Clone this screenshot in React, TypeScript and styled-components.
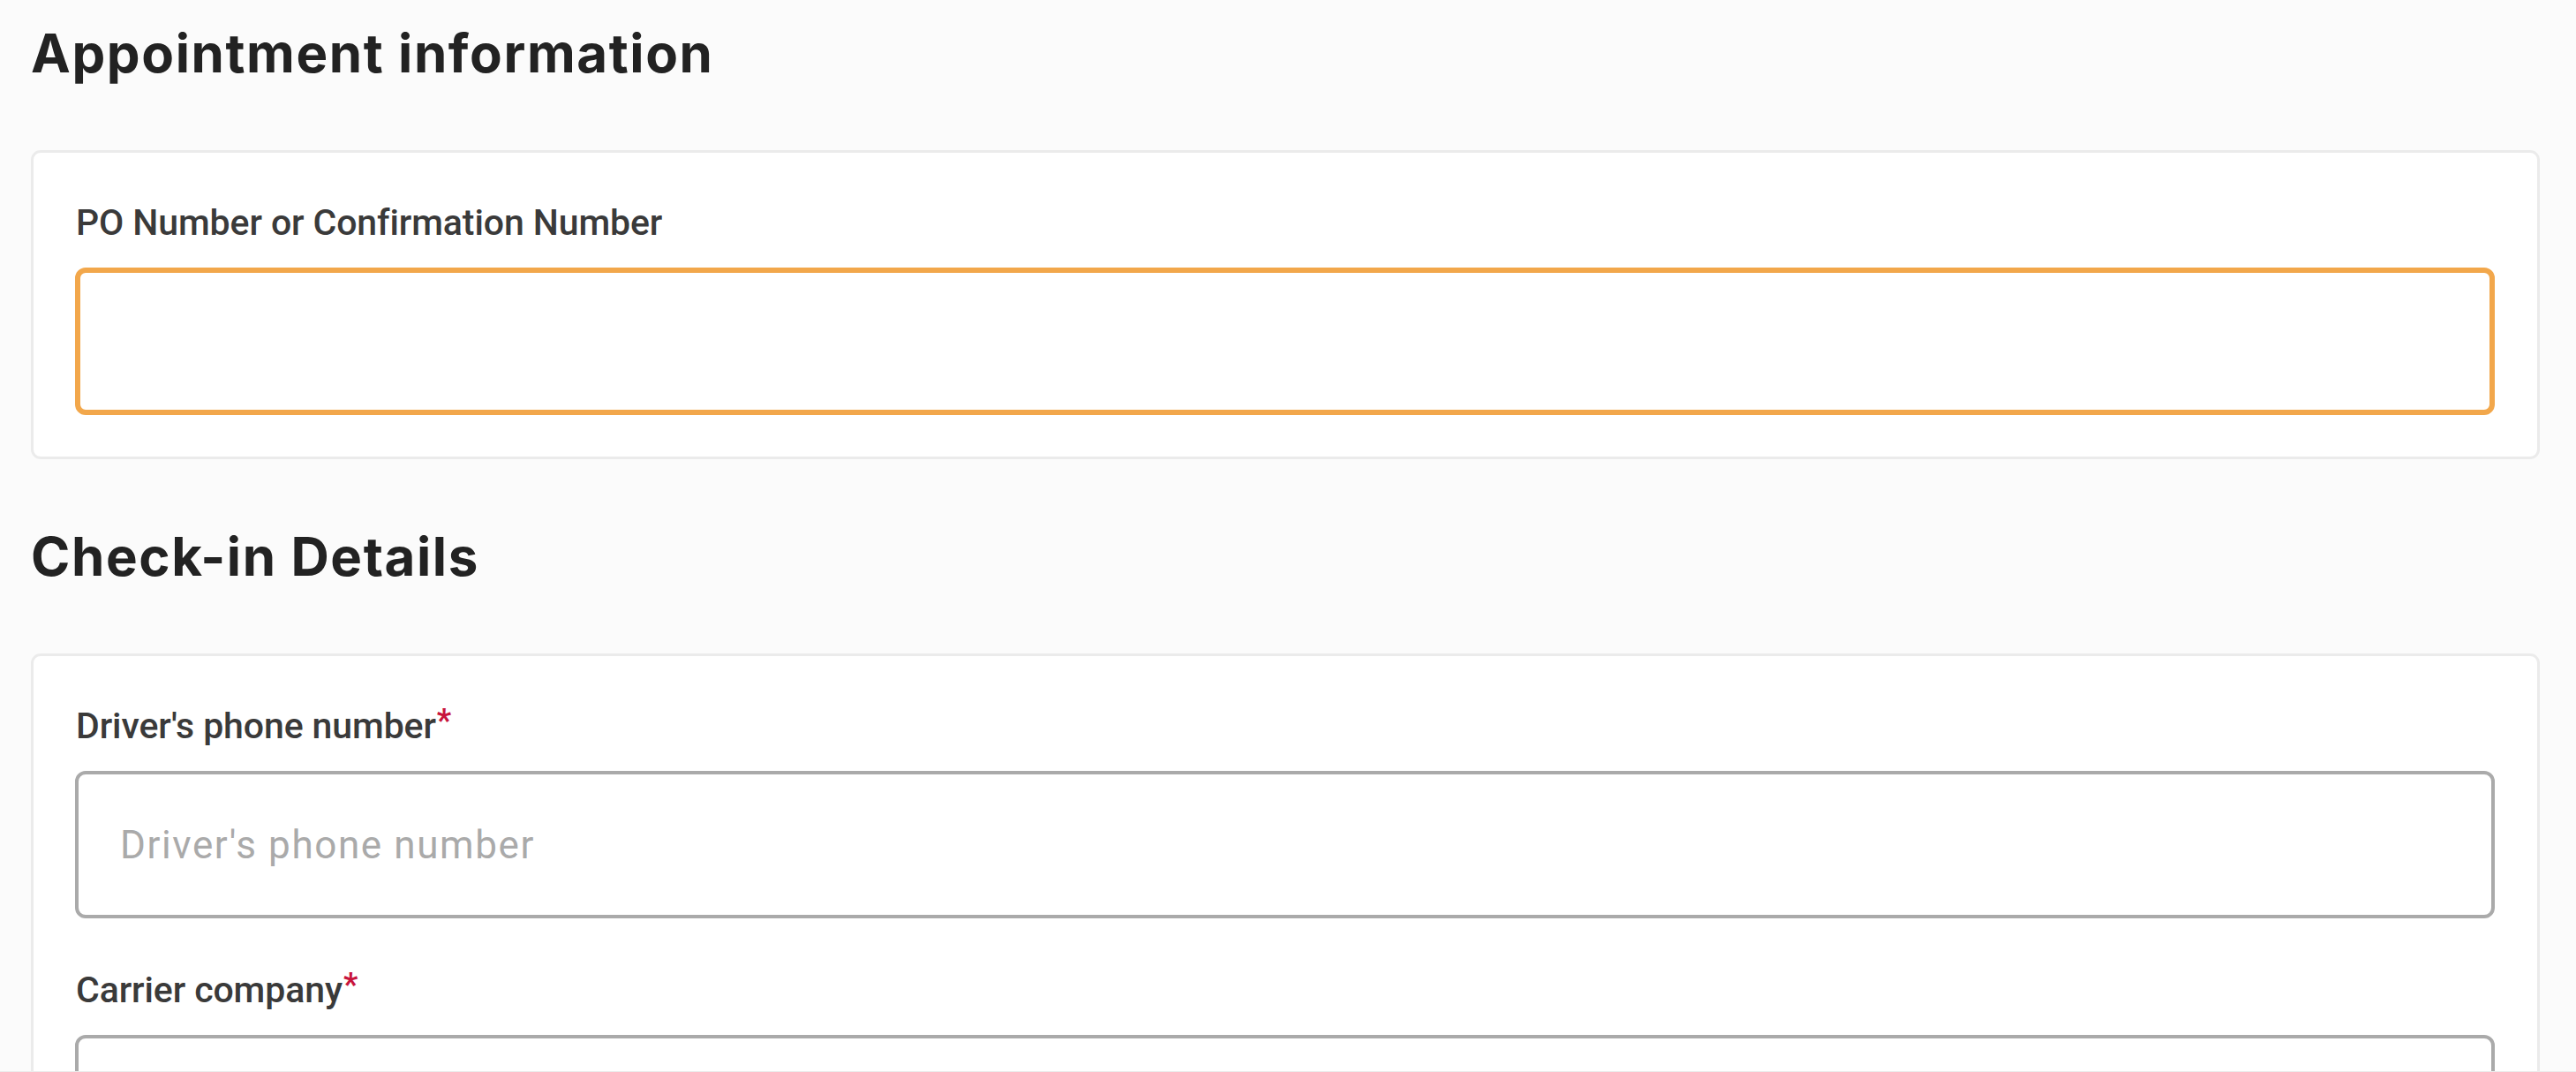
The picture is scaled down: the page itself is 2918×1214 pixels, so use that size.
import React from "react";
import styled, { createGlobalStyle } from "styled-components";

const GlobalStyle = createGlobalStyle`
  html, body {
    margin: 0;
    padding: 0;
    background: #fbfbfb;
  }
  * { box-sizing: border-box; }
`;

const Page = styled.main`
  display: flex;
  flex-direction: column;
  gap: 74px;
  padding: 24px 41px 0 35px;
  min-height: 100vh;
`;

const Section = styled.section`
  display: flex;
  flex-direction: column;
  gap: 74px;
`;

const Heading = styled.h2`
  margin: 0;
  font-family: Inter, "Noto Sans", sans-serif;
  font-weight: 700;
  font-size: 60px;
  line-height: 72px;
  letter-spacing: 1.6px;
  color: #222222;
`;

const Card = styled.div`
  display: flex;
  flex-direction: column;
  gap: 57px;
  background: #ffffff;
  border: 3px solid #ebebeb;
  border-radius: 11px;
  padding: 55px 48px 47px 47px;
`;

const Field = styled.label`
  display: flex;
  flex-direction: column;
  gap: 27px;
`;

const LabelText = styled.span`
  font-family: Roboto, "Noto Sans", sans-serif;
  font-weight: 500;
  font-size: 41px;
  line-height: 48px;
  letter-spacing: -0.1px;
  color: #3a3a3a;
  padding-left: 1px;
`;

const Required = styled.span`
  color: #c8143c;
  font-weight: 700;
  font-size: 36px;
  margin-left: 1px;
  vertical-align: 8px;
  line-height: 0;
`;

const Input = styled.input<{ $focused?: boolean }>`
  display: block;
  width: 100%;
  height: 167px;
  padding: 0 47px;
  background: #ffffff;
  border: ${(p) => (p.$focused ? "6px solid #f2a74b" : "4px solid #aaaaaa")};
  border-radius: 12px;
  outline: none;
  font-family: Roboto, "Noto Sans", sans-serif;
  font-weight: 400;
  font-size: 44px;
  letter-spacing: 1.6px;
  color: #333333;

  &::placeholder {
    color: #aaaaaa;
  }
`;

const FooterEdge = styled.div`
  position: fixed;
  left: 0;
  right: 0;
  bottom: 0;
  height: 1px;
  background: #ececec;
`;

export default function App() {
  return (
    <>
      <GlobalStyle />
      <Page>
        <Section>
          <Heading>Appointment information</Heading>
          <Card>
            <Field>
              <LabelText>PO Number or Confirmation Number</LabelText>
              <Input $focused type="text" />
            </Field>
          </Card>
        </Section>
        <Section>
          <Heading>Check-in Details</Heading>
          <Card>
            <Field>
              <LabelText>
                Driver's phone number<Required>*</Required>
              </LabelText>
              <Input type="tel" placeholder="Driver's phone number" />
            </Field>
            <Field>
              <LabelText>
                Carrier company<Required>*</Required>
              </LabelText>
              <Input type="text" />
            </Field>
          </Card>
        </Section>
      </Page>
      <FooterEdge />
    </>
  );
}
